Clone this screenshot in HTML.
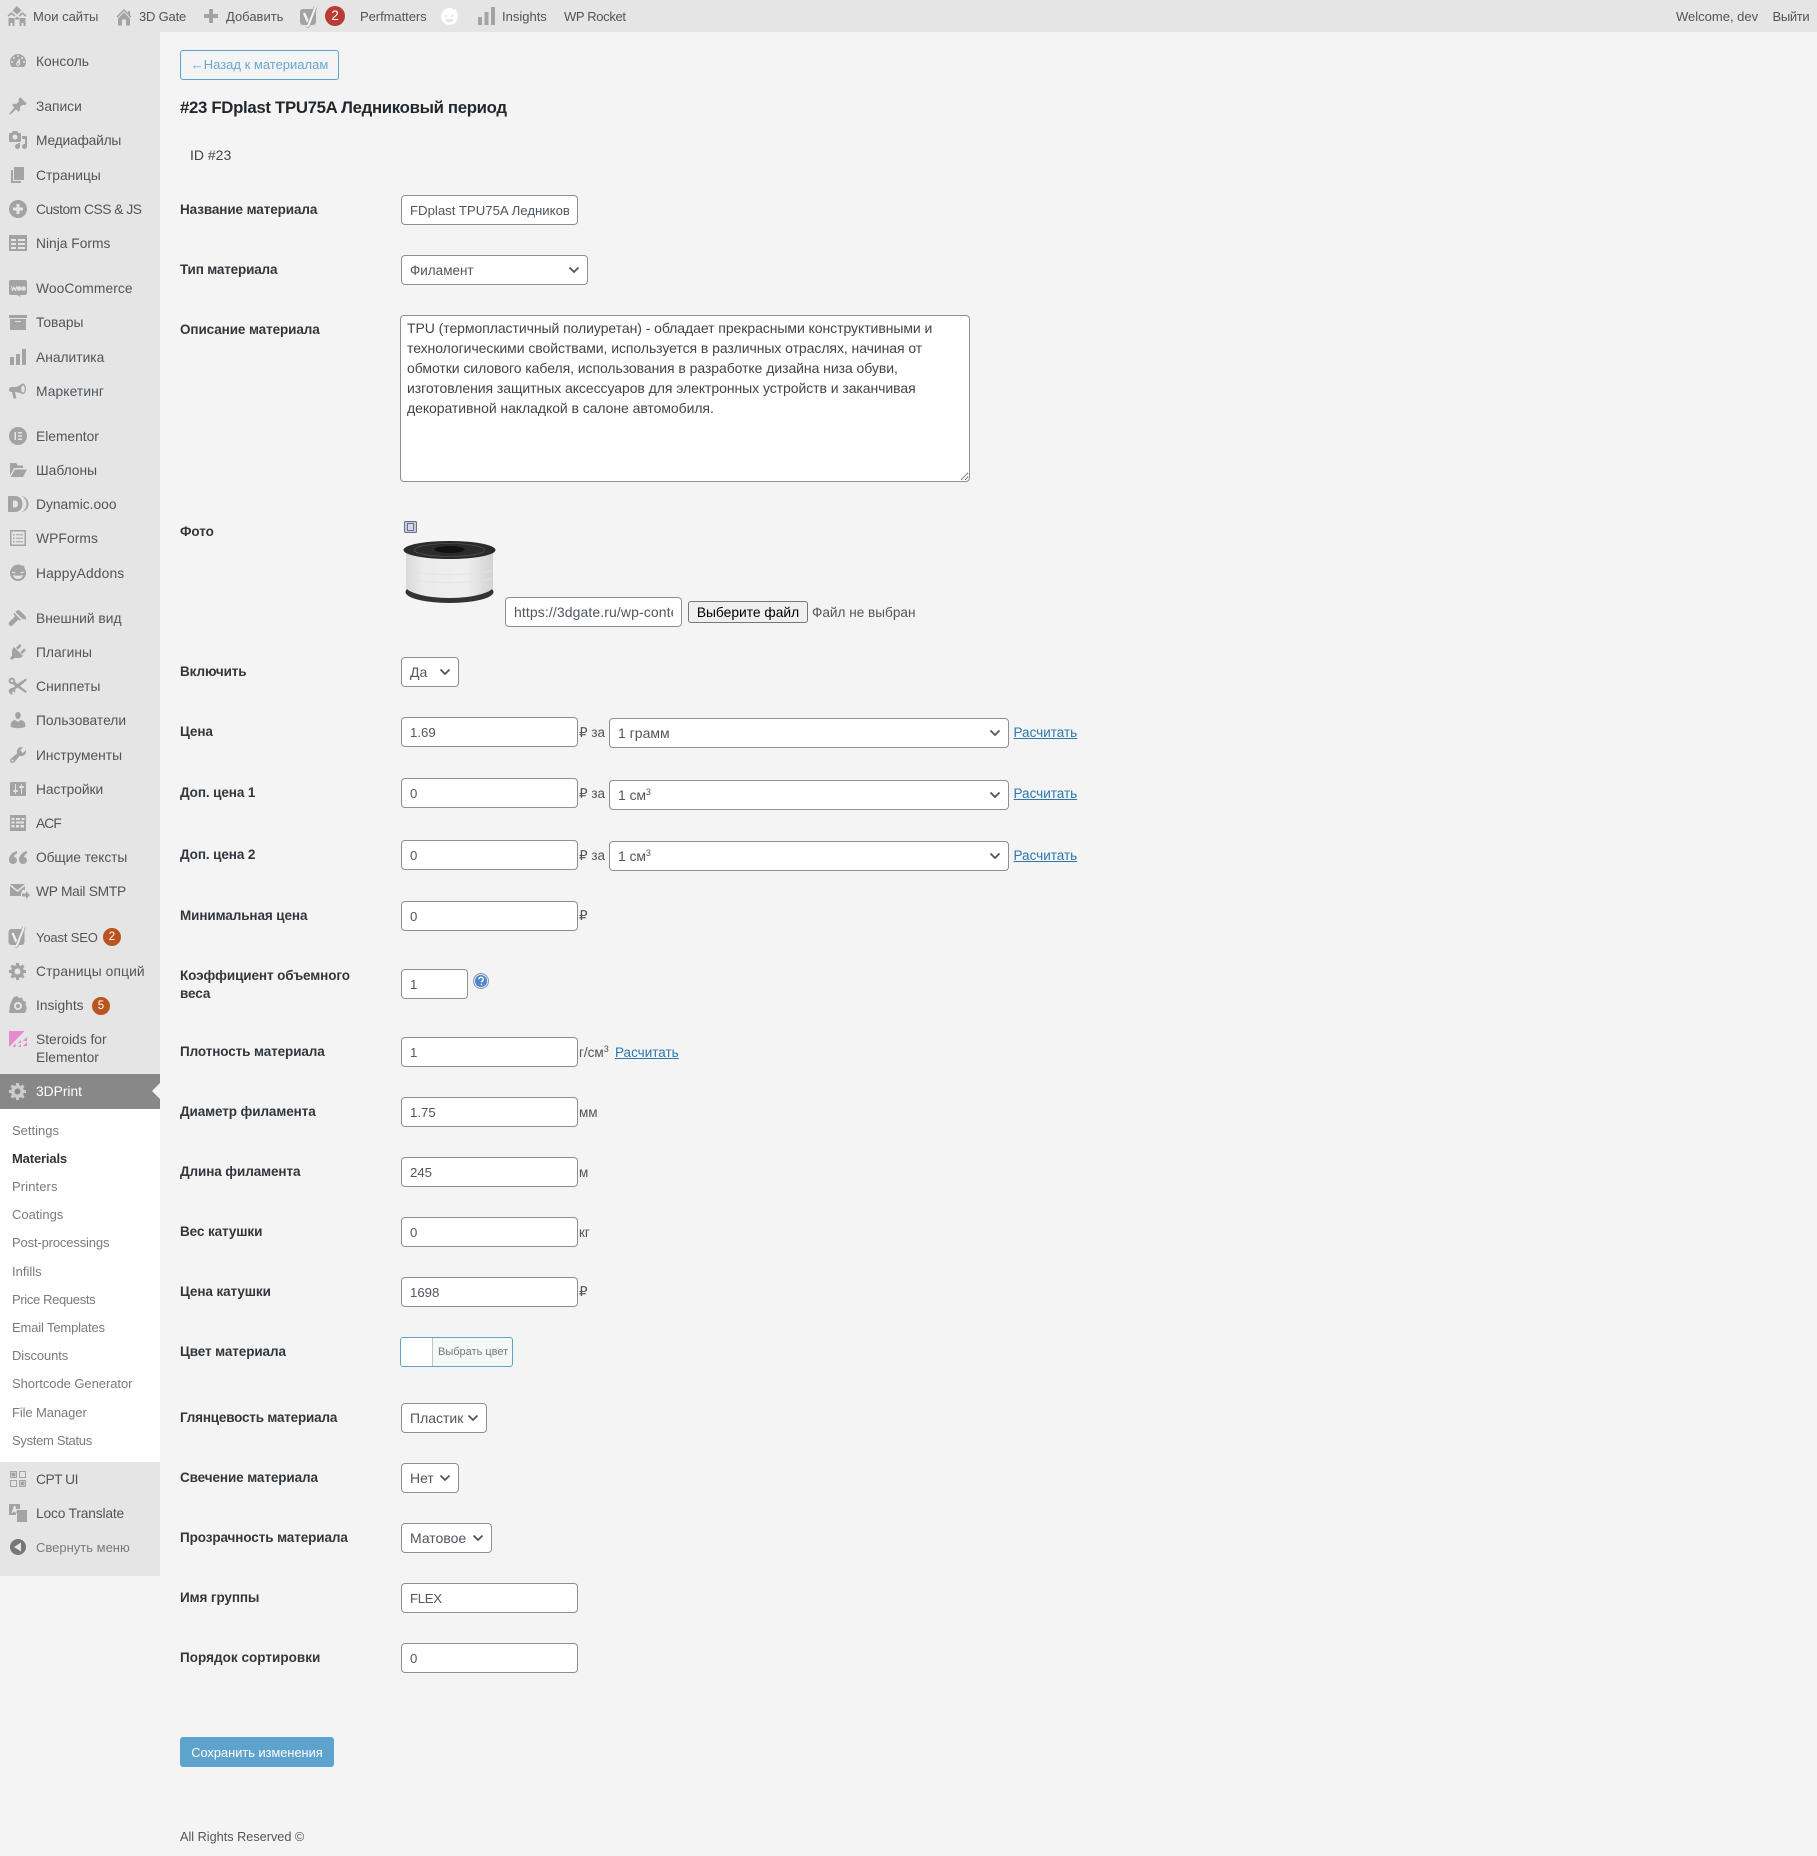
<!DOCTYPE html>
<html lang="ru"><head><meta charset="utf-8"><title>3DPrint Materials</title>
<style>
html,body{margin:0;padding:0}
body{position:relative;width:1817px;height:1856px;overflow:hidden;background:#f4f4f4;font:14px/20px "Liberation Sans","Noto Sans CJK SC",sans-serif;color:#444}
.b{position:absolute}
.t{position:absolute;white-space:nowrap;line-height:20px}
.top{position:absolute;left:0;top:0;width:1817px;height:32px;background:#e5e5e5}
.side{position:absolute;left:0;top:32px;width:160px;height:1544px;background:#e5e5e5}
.sub{position:absolute;left:0;top:1109px;width:160px;height:353px;background:#fff}
.cur{position:absolute;left:0;top:1074px;width:160px;height:35px;background:#888}
.m{font-size:13.8px;left:36px;color:#50555a;margin-top:1px}
.s{font-size:13px;left:12px;color:#7a7a7a;margin-top:1px}
.tb{font-size:13px;color:#50555a;top:6.5px}
svg{position:absolute;fill:#a3a3a3}
.i{width:20px;height:20px;left:8px}
.l{font-size:13.5px;font-weight:bold;left:180px;color:#32373c;letter-spacing:-.1px;margin-top:1px}
input,select,textarea{position:absolute;box-sizing:border-box;margin:0;background:#fff;border:1px solid #8c8f94;border-radius:4px;font:14px "Liberation Sans",sans-serif;color:#50575e;outline:0}
input{padding:0 8px;height:30px;width:177px;left:401px;font-size:13.2px}
select{appearance:none;-webkit-appearance:none;padding:0 8px;height:30px;left:401px}
.ch{fill:none;stroke:#555;stroke-width:1.8;width:12px;height:8px}
.u{font-size:13.5px;left:579px;color:#555}
a{position:absolute;white-space:nowrap;line-height:20px;font-size:13.5px;color:#2b78ad;text-decoration:underline}
sup{font-size:9px;line-height:0;vertical-align:5px}
</style></head><body>

<div class="top"></div>
<div class="side"></div>
<div class="sub"></div>
<div class="cur"></div>
<svg class="b" style="left:152px;top:1081px;width:8px;height:20px;fill:#f4f4f4" viewBox="0 0 8 20"><path d="M8 2L0 10l8 8z"/></svg>

<!-- top bar -->
<svg style="left:7px;top:6px;width:20px;height:21px" viewBox="0 0 20 21"><path d="M10 0l4.500 4.500-4.500 4-4.500-4zM4.500 6l4 3.500-1.200 1.200L4.500 8.200 1.700 10.700.5 9.500zM15.500 6l4 3.500-1.200 1.200-2.800-2.500-2.800 2.500-1.200-1.200zM10 10.500l-2 1.800v1.200h4v-1.200zM1.500 12h6v8h-2v-3h-2v3h-2zM12.500 12h6v8h-2v-3h-2v3h-2z"/></svg>
<div class="t tb" style="left:33px">Мои сайты</div>
<svg style="left:114px;top:6px;width:20px;height:21px" viewBox="0 0 20 20"><path d="M16 8.500l1.530 1.530-1.060 1.060L10 4.620l-6.470 6.470-1.060-1.060L10 2.500l4 4v-2h2v4zm-6-2.460l6 5.990V19H4v-6.970zM12 19v-6H8v6h4z"/></svg>
<div class="t tb" style="left:139px;letter-spacing:-.2px">3D Gate</div>
<svg style="left:203px;top:8px;width:16px;height:16px" viewBox="0 0 16 16"><path d="M6 1h4v5h5v4h-5v5H6v-5H1V6h5z"/></svg>
<div class="t tb" style="left:226px">Добавить</div>
<svg style="left:300px;top:6px;width:19px;height:22px" viewBox="0 0 19 22"><rect x="0" y="3" width="16" height="16" rx="3"/><path d="M4 7l4 9" fill="none" stroke="#f2f2f2" stroke-width="2.400"/><path d="M15.500 1L9 18c-.5 1.500-1.500 2.500-3 2.500" fill="none" stroke="#a3a3a3" stroke-width="3.600"/><path d="M15.500 1L9 18c-.5 1.500-1.500 2.500-3 2.500" fill="none" stroke="#f2f2f2" stroke-width="2"/></svg>
<div class="b" style="left:325px;top:6px;width:20px;height:20px;border-radius:50%;background:#b93b32;color:#fff;font-size:13.500px;line-height:20px;text-align:center">2</div>
<div class="t tb" style="left:360px;letter-spacing:-.05px">Perfmatters</div>
<svg style="left:440px;top:7px;width:19px;height:19px;fill:#fff" viewBox="0 0 18 18"><path fill-rule="evenodd" d="M9 1c2 0 3.500.6 4.800 1.800L15 1l.6 3.500C16.500 5.800 17 7.300 17 9c0 4.400-3.600 8-8 8s-8-3.600-8-8 3.600-8 8-8zM4.500 7.500L4 8.800l3 .7.300-1.200zM13 7.500l-3 .8.300 1.200 3-.7zM5 11c.6 2.300 2 3.500 4 3.500s3.400-1.200 4-3.500c-2.600.8-5.400.8-8 0z"/></svg>
<svg style="left:478px;top:6px;width:17px;height:20px" viewBox="0 0 17 20"><path d="M0 11h4v8H0zM6.500 6h4v13h-4zM13 1h4v18h-4z"/></svg>
<div class="t tb" style="left:502px">Insights</div>
<div class="t tb" style="left:564px;letter-spacing:-.35px">WP Rocket</div>
<div class="t tb" style="left:1676px">Welcome, dev</div>
<div class="t tb" style="left:1772.500px;letter-spacing:-.35px">Выйти</div>

<!-- sidebar -->
<svg class="i" style="top:51px" viewBox="0 0 20 20"><path d="M3.760 16h12.480c1.100-1.370 1.760-3.110 1.760-5 0-4.420-3.580-8-8-8s-8 3.580-8 8c0 1.890.66 3.630 1.760 5zM10 4c.55 0 1 .45 1 1s-.45 1-1 1-1-.45-1-1 .45-1 1-1zM6 6c.55 0 1 .45 1 1s-.45 1-1 1-1-.45-1-1 .45-1 1-1zm8 0c.55 0 1 .45 1 1s-.45 1-1 1-1-.45-1-1 .45-1 1-1zm-5.370 5.550L12 7v6c0 1.100-.9 2-2 2s-2-.9-2-2c0-.57.24-1.080.63-1.450zM4 10c.55 0 1 .45 1 1s-.45 1-1 1-1-.45-1-1 .45-1 1-1zm12 0c.55 0 1 .45 1 1s-.45 1-1 1-1-.45-1-1 .45-1 1-1zm-5 3c0-.55-.45-1-1-1s-1 .45-1 1 .45 1 1 1 1-.45 1-1z"/></svg>
<div class="t m" style="top:51px">Консоль</div>
<svg class="i" style="top:96px" viewBox="0 0 20 20"><path d="M10.440 3.020l1.820-1.820 6.360 6.350-1.830 1.820c-1.050-.68-2.480-.57-3.410.36l-.75.75c-.92.93-1.040 2.350-.35 3.410l-1.830 1.820-2.410-2.410-2.800 2.790c-.42.42-3.380 2.710-3.800 2.290s1.860-3.390 2.280-3.810l2.790-2.790L4.100 9.360l1.830-1.820c1.050.69 2.480.57 3.400-.36l.75-.75c.93-.92 1.050-2.350.36-3.410z"/></svg>
<div class="t m" style="top:96px">Записи</div>
<svg class="i" style="top:130px" viewBox="0 0 20 20"><path d="M13 11V4c0-.55-.45-1-1-1h-1.670L9 1H5L3.670 3H2c-.55 0-1 .45-1 1v7c0 .55.45 1 1 1h10c.55 0 1-.45 1-1zM7 4.500c1.380 0 2.500 1.120 2.500 2.500S8.380 9.500 7 9.500 4.500 8.380 4.500 7 5.620 4.500 7 4.500zM14 6h5v10.500c0 1.380-1.120 2.500-2.500 2.500S14 17.880 14 16.500s1.120-2.500 2.500-2.500c.17 0 .34.02.5.05V9h-3V6zm-4 8.050V13h2v3.500c0 1.380-1.120 2.500-2.500 2.500S7 17.880 7 16.500 8.120 14 9.500 14c.17 0 .34.02.5.05z"/></svg>
<div class="t m" style="top:130px;letter-spacing:-.2px">Медиафайлы</div>
<svg class="i" style="top:165px" viewBox="0 0 20 20"><path d="M6 15V2h10v13H6zm-1 1h8v2H3V5h2v11z"/></svg>
<div class="t m" style="top:165px">Страницы</div>
<svg class="i" style="top:199px" viewBox="0 0 20 20"><path fill-rule="evenodd" d="M10 1a9 9 0 1 1 0 18 9 9 0 0 1 0-18zM8.500 5v3.500H5v3h3.500V15h3v-3.500H15v-3h-3.500V5z"/></svg>
<div class="t m" style="top:199px;letter-spacing:-.48px">Custom CSS &amp; JS</div>
<svg class="i" style="top:233px" viewBox="0 0 20 20"><path fill-rule="evenodd" d="M1 2h18v16H1zM3 6v2h5V6zm7 0v2h7V6zM3 10v2h5v-2zm7 0v2h7v-2zM3 14v2h5v-2zm7 0v2h7v-2z"/></svg>
<div class="t m" style="top:233px">Ninja Forms</div>
<svg class="i" style="top:278px" viewBox="0 0 20 20"><path fill-rule="evenodd" d="M3 2h14a2 2 0 0 1 2 2v11a2 2 0 0 1-2 2h-5l1 2-4-2H3a2 2 0 0 1-2-2V4a2 2 0 0 1 2-2zM3 8l1 5h1l1-2.500L7 13h1l1-5H8l-.6 3L6.300 8.500h-.6L4.600 11 4 8zm8 .2a2.300 2.300 0 1 0 0 4.600 2.300 2.300 0 0 0 0-4.600zm4.500 0a2.300 2.300 0 1 0 0 4.600 2.300 2.300 0 0 0 0-4.600z"/></svg>
<div class="t m" style="top:278px;letter-spacing:.1px">WooCommerce</div>
<svg class="i" style="top:312px" viewBox="0 0 20 20"><path d="M19 3v3H1V3zM2 7h16v11H2zm11 3V9H7v1z"/></svg>
<div class="t m" style="top:312px">Товары</div>
<svg class="i" style="top:347px" viewBox="0 0 20 20"><path d="M18 18V2h-4v16h4zm-6 0V7H8v11h4zm-6 0v-8H2v8h4z"/></svg>
<div class="t m" style="top:347px">Аналитика</div>
<svg class="i" style="top:381px" viewBox="0 0 20 20"><path fill-rule="evenodd" d="M18 8c0 3-1.500 5-3 5-.8 0-5-2-8-2l1.500 6.500H5.500L4 11H3c-1 0-2-1-2-2.500S2 6 3 6h4c3 0 7-3.500 8-3.500 1.500 0 3 2.500 3 5.500zm-3-3.500c-1 0-1.800 1.500-1.800 3.500s.8 3.500 1.800 3.500 1.800-1.500 1.800-3.500-.8-3.500-1.800-3.500z"/></svg>
<div class="t m" style="top:381px;letter-spacing:.1px">Маркетинг</div>
<svg class="i" style="top:426px" viewBox="0 0 20 20"><path fill-rule="evenodd" d="M10 1a9 9 0 1 1 0 18 9 9 0 0 1 0-18zM6.500 6v8H8V6zm3.500 0v1.500h4V6zm0 3.300v1.500h4V9.300zm0 3.200V14h4v-1.500z"/></svg>
<div class="t m" style="top:426px">Elementor</div>
<svg class="i" style="top:460px" viewBox="0 0 20 20"><path d="M2 3h6l2 2.500h5V8H6L2 15.500zM6.800 9.500H19L15 17H2.800z"/></svg>
<div class="t m" style="top:460px">Шаблоны</div>
<svg class="i" style="top:494px;left:7px;width:22px" viewBox="0 0 22 20"><path fill-rule="evenodd" d="M1 2h7c4.500 0 7.500 3.300 7.500 8S12.500 18 8 18H1zM6 6.500v7h2c1.800 0 3-1.500 3-3.500s-1.200-3.500-3-3.500z"/><path d="M15 2c4 1 6.500 4.200 6.500 8s-2.500 7-6.500 8c2.500-1.800 4.500-4.700 4.500-8S17.500 3.800 15 2z"/></svg>
<div class="t m" style="top:494px">Dynamic.ooo</div>
<svg class="i" style="top:528px" viewBox="0 0 20 20"><path fill-rule="evenodd" d="M2 2h16v16H2zm1.500 1.500v13h13v-13zM5 6h1.500v1.500H5zm3 .3h7v1H8zM5 9.500h1.500V11H5zm3 .3h7v1H8zM5 13h1.500v1.500H5zm3 .3h7v1H8z"/></svg>
<div class="t m" style="top:528px;letter-spacing:.1px">WPForms</div>
<svg class="i" style="top:563px" viewBox="0 0 20 20"><path fill-rule="evenodd" d="M10 1.500c2 0 3.700.7 5 1.800l1-1.300.5 3.200c1 1.400 1.500 3 1.500 4.800 0 4.400-3.600 8-8 8s-8-3.600-8-8 3.600-8.500 8-8.500zM4.500 8.500L4 9.800l3.200.7.300-1.200zm11 0l-3 .8.300 1.200 3.200-.7zM5 12c.6 2.500 2.500 4 5 4s4.400-1.500 5-4c-3.200.9-6.800.9-10 0z"/></svg>
<div class="t m" style="top:563px;letter-spacing:.15px">HappyAddons</div>
<svg class="i" style="top:608px" viewBox="0 0 20 20"><path d="M14.480 11.060L7.410 3.990l1.500-1.500c.5-.56 2.300-.47 3.360.59l4.950 4.950c1.060 1.060 1.240 2.680.59 3.360zm-8.480-6.360l7 7-1.200 1.200-1.400-1.400-5.700 5.700c-.8.800-2.800 1-3.500.2s-.6-2.700.2-3.500l5.700-5.700-1.400-1.400z"/></svg>
<div class="t m" style="top:608px">Внешний вид</div>
<svg class="i" style="top:642px" viewBox="0 0 20 20"><path d="M13.110 4.360L9.870 7.600 8 5.730l3.240-3.240c.35-.34 1.050-.2 1.560.32.52.51.66 1.210.31 1.550zm-8 1.770l.91-1.120 9.010 9.010-1.190.84c-.71.71-2.630 1.160-3.820 1.160H6.140L4.900 17.260c-.59.59-1.540.59-2.120 0-.59-.58-.59-1.530 0-2.120l1.240-1.240v-3.880c0-1.130.4-3.190 1.090-3.890zm7.260 3.970l3.240-3.240c.34-.35 1.040-.21 1.550.31.520.51.660 1.210.31 1.550l-3.240 3.250z"/></svg>
<div class="t m" style="top:642px">Плагины</div>
<svg class="i" style="top:676px" viewBox="0 0 20 20"><path fill-rule="evenodd" d="M4 1.500a3.200 3.200 0 0 1 3 4.200L9.500 8l8-5.500L19 4l-7 6 7 5.500-1.500 1.500-8-5.500-2.500 2.200A3.300 3.300 0 1 1 4.800 12l2.200-2-2.200-2A3.300 3.300 0 1 1 4 1.500zm0 2a1.300 1.300 0 1 0 0 2.600 1.300 1.300 0 0 0 0-2.600zm1.500 12a1.300 1.300 0 1 0 0 2.600 1.300 1.300 0 0 0 0-2.600z"/></svg>
<div class="t m" style="top:676px;letter-spacing:.1px">Сниппеты</div>
<svg class="i" style="top:710px" viewBox="0 0 20 20"><path d="M10 9.250c-2.270 0-2.730-3.440-2.730-3.440C7 4.020 7.820 2 9.970 2c2.160 0 2.980 2.020 2.710 3.810 0 0-.41 3.440-2.680 3.440zm0 2.570L12.720 10c2.390 0 4.520 2.330 4.520 4.530v2.490s-3.650 1.130-7.240 1.130c-3.650 0-7.240-1.130-7.240-1.130v-2.490c0-2.250 1.940-4.480 4.470-4.480z"/></svg>
<div class="t m" style="top:710px">Пользователи</div>
<svg class="i" style="top:745px" viewBox="0 0 20 20"><path d="M16.680 9.770c-1.340 1.340-3.300 1.670-4.950.99l-5.410 6.520c-.99.99-2.590.99-3.580 0s-.99-2.590 0-3.570l6.520-5.420c-.68-1.650-.35-3.610.99-4.950 1.280-1.280 3.120-1.620 4.720-1.060l-2.890 2.890 2.820 2.820 2.860-2.870c.53 1.580.18 3.390-1.080 4.650zM3.810 16.210c.4.39 1.040.39 1.430 0 .4-.4.4-1.040 0-1.430-.39-.4-1.030-.4-1.430 0-.39.39-.39 1.030 0 1.430z"/></svg>
<div class="t m" style="top:745px">Инструменты</div>
<svg class="i" style="top:779px" viewBox="0 0 20 20"><path d="M18 16V4c0-.55-.45-1-1-1H3c-.55 0-1 .45-1 1v12c0 .55.45 1 1 1h14c.55 0 1-.45 1-1zM8 11h1c.55 0 1 .45 1 1s-.45 1-1 1H8v1.500c0 .28-.22.5-.5.5s-.5-.22-.5-.5V13H6c-.55 0-1-.45-1-1s.45-1 1-1h1V5.500c0-.28.22-.5.5-.5s.5.22.5.5V11zm5-2h-1c-.55 0-1-.45-1-1s.45-1 1-1h1V5.500c0-.28.22-.5.5-.5s.5.22.5.5V7h1c.55 0 1 .45 1 1s-.45 1-1 1h-1v5.500c0 .28-.22.5-.5.5s-.5-.22-.5-.5V9z" fill-rule="evenodd"/></svg>
<div class="t m" style="top:779px;letter-spacing:-.05px">Настройки</div>
<svg class="i" style="top:813px" viewBox="0 0 20 20"><path fill-rule="evenodd" d="M2 2h16v16H2zm1.500 3v2h3V5zm4.500 0v2h4V5zm5.500 0v2h3V5zm-10 3.500v2h3v-2zm4.500 0v2h8v-2zm-4.500 3.500v2.500h3V12zm4.500 0v2.500h3V12zm4.500 0v2.500h3.500V12z"/></svg>
<div class="t m" style="top:813px;letter-spacing:-.9px">ACF</div>
<svg class="i" style="top:847px" viewBox="0 0 20 20"><path d="M9 4C5 5 1 8 1 12.500 1 15 2.500 17 5 17s4-1.700 4-3.700S7.500 10 6 10c.3-1.500 1.500-3 3-3.800zM19 4c-4 1-8 4-8 8.500 0 2.500 1.500 4.500 4 4.500s4-1.700 4-3.700-1.500-3.300-3-3.300c.3-1.500 1.500-3 3-3.800z"/></svg>
<div class="t m" style="top:847px;letter-spacing:-.1px">Общие тексты</div>
<svg class="i" style="top:881px;width:22px;left:9px" viewBox="0 0 22 20"><path d="M1 3h15l-7.500 6zM1 5l7.500 6L16 5v4h-3v2.500h-1V15H1zM13 12.500h4V10l4 4-4 4v-2.500h-4z"/></svg>
<div class="t m" style="top:881px;letter-spacing:-.28px">WP Mail SMTP</div>
<svg class="i" style="top:926px;height:22px" viewBox="0 0 19 22"><rect x="0" y="3" width="16" height="16" rx="3"/><path d="M4 7l4 9" fill="none" stroke="#eee" stroke-width="2.400"/><path d="M15.500 1L9 18c-.5 1.500-1.500 2.500-3 2.500" fill="none" stroke="#a3a3a3" stroke-width="3.600"/><path d="M15.500 1L9 18c-.5 1.500-1.500 2.500-3 2.500" fill="none" stroke="#eee" stroke-width="2"/></svg>
<div class="t m" style="top:927px;font-size:13px;letter-spacing:-.15px">Yoast SEO</div>
<div class="b" style="left:103px;top:928px;width:18px;height:18px;border-radius:50%;background:#ba541e;color:#fff;font-size:11.500px;line-height:18px;text-align:center">2</div>
<svg class="i" style="top:961px" viewBox="0 0 20 20"><path d="M18 12h-2.180c-.17.7-.44 1.350-.81 1.930l1.540 1.540-2.100 2.100-1.540-1.540c-.58.36-1.230.63-1.910.79V19H8v-2.180c-.68-.16-1.330-.43-1.910-.79l-1.540 1.540-2.120-2.120 1.540-1.540c-.36-.58-.63-1.230-.79-1.910H1V9.030h2.170c.16-.7.44-1.350.8-1.940L2.430 5.550l2.100-2.100 1.540 1.540c.58-.37 1.240-.64 1.930-.81V2h3v2.180c.68.16 1.330.43 1.910.79l1.540-1.540 2.120 2.120-1.540 1.540c.36.59.64 1.240.8 1.940H18V12zm-8.500 1.500c1.660 0 3-1.340 3-3s-1.340-3-3-3-3 1.340-3 3 1.340 3 3 3z"/></svg>
<div class="t m" style="top:961px;letter-spacing:.12px">Страницы опций</div>
<svg class="i" style="top:995px" viewBox="0 0 20 20"><path fill-rule="evenodd" d="M9 1l2 2 3-.5 1 3 3 1.500-.5 3 1.500 3-2 5H1l1-8 2-5 2-3zm1 6a4 4 0 1 0 0 8 4 4 0 0 0 0-8zm0 2a2 2 0 1 1 0 4 2 2 0 0 1 0-4z"/></svg>
<div class="t m" style="top:995px">Insights</div>
<div class="b" style="left:92px;top:997px;width:18px;height:18px;border-radius:50%;background:#ba541e;color:#fff;font-size:11.500px;line-height:18px;text-align:center">5</div>
<svg class="i" style="top:1030px;height:18px;fill:#e58acb" viewBox="0 0 20 18"><path d="M1 1h15.500L1 17zM19 7l-4 4h4zM13 10l-3 3h3zM19 12l-4 4h4zM13 14l-3 3h3zM7.500 13l-3 4h3z"/></svg>
<div class="t m" style="top:1029px">Steroids for</div>
<div class="t m" style="top:1047px">Elementor</div>
<svg class="i" style="top:1081px;fill:#ccc" viewBox="0 0 20 20"><path d="M18 12h-2.180c-.17.7-.44 1.350-.81 1.930l1.540 1.540-2.100 2.100-1.540-1.540c-.58.36-1.230.63-1.910.79V19H8v-2.180c-.68-.16-1.330-.43-1.910-.79l-1.540 1.540-2.120-2.120 1.540-1.540c-.36-.58-.63-1.230-.79-1.910H1V9.030h2.170c.16-.7.44-1.350.8-1.940L2.430 5.550l2.100-2.100 1.540 1.540c.58-.37 1.240-.64 1.930-.81V2h3v2.180c.68.16 1.330.43 1.910.79l1.540-1.540 2.120 2.120-1.540 1.540c.36.59.64 1.240.8 1.940H18V12zm-8.500 1.500c1.660 0 3-1.340 3-3s-1.340-3-3-3-3 1.340-3 3 1.340 3 3 3z"/></svg>
<div class="t m" style="top:1081px;color:#fff">3DPrint</div>

<div class="t s" style="top:1120px">Settings</div>
<div class="t s" style="top:1148px;color:#333;font-weight:bold;letter-spacing:-.15px">Materials</div>
<div class="t s" style="top:1176px;letter-spacing:.1px">Printers</div>
<div class="t s" style="top:1204px">Coatings</div>
<div class="t s" style="top:1232px;letter-spacing:-.15px">Post-processings</div>
<div class="t s" style="top:1261px">Infills</div>
<div class="t s" style="top:1289px;letter-spacing:-.35px">Price Requests</div>
<div class="t s" style="top:1317px;letter-spacing:-.15px">Email Templates</div>
<div class="t s" style="top:1345px;letter-spacing:-.1px">Discounts</div>
<div class="t s" style="top:1373px;letter-spacing:-.05px">Shortcode Generator</div>
<div class="t s" style="top:1402px;letter-spacing:-.1px">File Manager</div>
<div class="t s" style="top:1430px;letter-spacing:-.3px">System Status</div>

<svg class="i" style="top:1469px" viewBox="0 0 20 20"><path fill-rule="evenodd" d="M2 2h7v7H2zm1 1v5h5V3zM11 2h7v7h-7zm1 1v5h5V3zM2 11h7v7H2zm1 1v5h5v-5zM11 11h7v7h-7zm1 1v5h5v-5z"/><path d="M3.500 3.500h4v4h-4zM12.500 12.500h4v4h-4z"/></svg>
<div class="t m" style="top:1469px;letter-spacing:-.5px">CPT UI</div>
<svg class="i" style="top:1503px" viewBox="0 0 20 20"><path fill-rule="evenodd" d="M1 1h11v5H8v6H1zm5 2L3.500 10h1.300l.4-1.300h2l.4 1.300h1L7.500 3zM9 7h10v12H9z"/></svg>
<div class="t m" style="top:1503px;letter-spacing:-.18px">Loco Translate</div>
<svg class="i" style="top:1537px;fill:#777" viewBox="0 0 20 20"><path fill-rule="evenodd" d="M10 2a8 8 0 1 1 0 16 8 8 0 0 1 0-16zm3 3.500L6 10l7 4.500z"/></svg>
<div class="t m" style="top:1537px;color:#7a7a7a;font-size:13px">Свернуть меню</div>

<!-- content -->
<div class="b" style="left:180px;top:50px;width:159px;height:30px;box-sizing:border-box;border:1px solid #5ea3cd;border-radius:3px;color:#6ba6d2;font-size:13px;line-height:28px;white-space:nowrap;text-align:center">←Назад к материалам</div>
<div class="t" style="left:180px;top:98px;font-size:16.800px;font-weight:bold;color:#23282d;letter-spacing:-.32px">#23 FDplast TPU75A Ледниковый период</div>
<div class="t" style="left:190px;top:145px;font-size:14px;color:#444">ID #23</div>

<div class="t l" style="top:199px">Название материала</div>
<input value="FDplast TPU75A Ледниковый период" style="top:195px">

<div class="t l" style="top:260px;margin-top:0;letter-spacing:-.17px">Тип материала</div>
<select style="top:255px;width:187px;font-size:13.500px"><option>Филамент</option></select>
<svg class="ch" style="left:568px;top:266px" viewBox="0 0 12 8"><path d="M1.500 1.500l4.500 4.500 4.500-4.500"/></svg>

<div class="t l" style="top:319px">Описание материала</div>
<textarea wrap="off" style="left:400px;top:315px;width:570px;height:167px;padding:2px 6px;line-height:20px;color:#444;white-space:pre;overflow:hidden;letter-spacing:-.06px">TPU (термопластичный полиуретан) - обладает прекрасными конструктивными и
технологическими свойствами, используется в различных отраслях, начиная от
обмотки силового кабеля, использования в разработке дизайна низа обуви,
изготовления защитных аксессуаров для электронных устройств и заканчивая
декоративной накладкой в салоне автомобиля.</textarea>

<div class="t l" style="top:521px">Фото</div>
<svg style="left:404px;top:521px;width:13px;height:12px;fill:none;stroke:#6a6f96" viewBox="0 0 13 12"><rect x=".5" y=".5" width="12" height="11" rx="1" fill="#c9cad8"/><rect x="3.500" y="2.500" width="6" height="7" fill="#d8d8e4"/></svg>
<svg style="left:403px;top:540px;width:93px;height:64px" viewBox="0 0 93 64">
<defs><linearGradient id="sp" x1="0" x2="1" y1="0" y2="0"><stop offset="0" stop-color="#d9d9d9"/><stop offset=".2" stop-color="#ececec"/><stop offset=".7" stop-color="#eeeeee"/><stop offset="1" stop-color="#d2d2d2"/></linearGradient></defs>
<ellipse cx="46.500" cy="52" rx="44" ry="11" fill="#333"/>
<path d="M3 10h87v37c0 5-19 11-43.500 11S3 52 3 47z" fill="url(#sp)"/>
<path d="M3 30c15 6 72 6 87 0M3 38c15 6 72 6 87 0" fill="none" stroke="#e2e2e2" stroke-width=".7"/>
<ellipse cx="46.500" cy="10" rx="46" ry="9" fill="#2b2b2b"/>
<ellipse cx="46.500" cy="9.500" rx="15" ry="3.500" fill="#111"/>
<ellipse cx="46.500" cy="10" rx="35" ry="6.500" fill="none" stroke="#5c5c5c" stroke-width=".6"/>
</svg>
<input value="https://3dgate.ru/wp-content/uploads/spool.png" style="left:505px;top:597px;font-size:14px;letter-spacing:.1px">
<div class="b" style="left:688px;top:601px;width:120px;height:22px;box-sizing:border-box;background:#efefef;border:1px solid #767676;border-radius:3px;color:#000;font-size:13.800px;line-height:21px;text-align:center;white-space:nowrap">Выберите файл</div>
<div class="t" style="left:812px;top:603px;font-size:13.600px;color:#555">Файл не выбран</div>

<div class="t l" style="top:661px">Включить</div>
<select style="top:657px;width:58px"><option>Да</option></select>
<svg class="ch" style="left:439px;top:668px" viewBox="0 0 12 8"><path d="M1.500 1.500l4.500 4.500 4.500-4.500"/></svg>

<div class="t l" style="top:721px">Цена</div>
<input value="1.69" style="top:717px">
<div class="t u" style="top:723px">₽ за</div>
<select style="left:609px;top:718px;width:400px"><option>1 грамм</option></select>
<svg class="ch" style="left:989px;top:729px" viewBox="0 0 12 8"><path d="M1.500 1.500l4.500 4.500 4.500-4.500"/></svg>
<a style="left:1013.500px;top:723px">Расчитать</a>

<div class="t l" style="top:782px">Доп. цена 1</div>
<input value="0" style="top:778px">
<div class="t u" style="top:784px">₽ за</div>
<select style="left:609px;top:780px;width:400px"><option></option></select>
<div class="t" style="left:618px;top:785px;color:#50575e;letter-spacing:-.1px">1 см<sup>3</sup></div>
<svg class="ch" style="left:989px;top:791px" viewBox="0 0 12 8"><path d="M1.500 1.500l4.500 4.500 4.500-4.500"/></svg>
<a style="left:1013.500px;top:784px">Расчитать</a>

<div class="t l" style="top:844px">Доп. цена 2</div>
<input value="0" style="top:840px">
<div class="t u" style="top:846px">₽ за</div>
<select style="left:609px;top:841px;width:400px"><option></option></select>
<div class="t" style="left:618px;top:846px;color:#50575e;letter-spacing:-.1px">1 см<sup>3</sup></div>
<svg class="ch" style="left:989px;top:852px" viewBox="0 0 12 8"><path d="M1.500 1.500l4.500 4.500 4.500-4.500"/></svg>
<a style="left:1013.500px;top:846px">Расчитать</a>

<div class="t l" style="top:905px">Минимальная цена</div>
<input value="0" style="top:901px">
<div class="t u" style="top:906px">₽</div>

<div class="t l" style="top:966px;margin-top:0">Коэффициент объемного</div>
<div class="t l" style="top:984px;margin-top:0">веса</div>
<input value="1" style="top:969px;width:67px">
<svg style="left:473px;top:973px;width:16px;height:16px" viewBox="0 0 16 16"><circle cx="8" cy="8" r="7.500" fill="#dfe5ee" stroke="#8a96a8"/><circle cx="8" cy="8" r="6" fill="#4f86d0"/><path d="M5.800 6.200C6 4.900 7 4.300 8.100 4.300c1.300 0 2.200.8 2.200 1.900 0 1.600-1.800 1.600-1.800 3.200M8.500 10.800v1.400" fill="none" stroke="#fff" stroke-width="1.400"/></svg>

<div class="t l" style="top:1041px">Плотность материала</div>
<input value="1" style="top:1037px">
<div class="t u" style="top:1043px">г/см<sup>3</sup></div>
<a style="left:615px;top:1043px">Расчитать</a>

<div class="t l" style="top:1101px">Диаметр филамента</div>
<input value="1.75" style="top:1097px">
<div class="t u" style="top:1103px">мм</div>

<div class="t l" style="top:1161px">Длина филамента</div>
<input value="245" style="top:1157px">
<div class="t u" style="top:1163px">м</div>

<div class="t l" style="top:1221px">Вес катушки</div>
<input value="0" style="top:1217px">
<div class="t u" style="top:1223px">кг</div>

<div class="t l" style="top:1281px">Цена катушки</div>
<input value="1698" style="top:1277px">
<div class="t u" style="top:1282px">₽</div>

<div class="t l" style="top:1341px">Цвет материала</div>
<div class="b" style="left:400px;top:1337px;width:113px;height:30px;box-sizing:border-box;border:1px solid #5ea3cd;border-radius:3px;background:#f6f7f7;overflow:hidden">
<div class="b" style="left:0;top:0;width:31px;height:28px;background:#fff;border-right:1px solid #c3c4c7"></div>
<div class="t" style="left:37px;top:4px;font-size:11px;color:#777">Выбрать цвет</div></div>

<div class="t l" style="top:1407px;letter-spacing:-.2px">Глянцевость материала</div>
<select style="top:1403px;width:86px"><option>Пластик</option></select>
<svg class="ch" style="left:467px;top:1414px" viewBox="0 0 12 8"><path d="M1.500 1.500l4.500 4.500 4.500-4.500"/></svg>

<div class="t l" style="top:1467px">Свечение материала</div>
<select style="top:1463px;width:58px"><option>Нет</option></select>
<svg class="ch" style="left:439px;top:1474px" viewBox="0 0 12 8"><path d="M1.500 1.500l4.500 4.500 4.500-4.500"/></svg>

<div class="t l" style="top:1527px">Прозрачность материала</div>
<select style="top:1523px;width:91px"><option>Матовое</option></select>
<svg class="ch" style="left:472px;top:1534px" viewBox="0 0 12 8"><path d="M1.500 1.500l4.500 4.500 4.500-4.500"/></svg>

<div class="t l" style="top:1587px">Имя группы</div>
<input value="FLEX" style="top:1583px;letter-spacing:-.3px">

<div class="t l" style="top:1647px;letter-spacing:.03px">Порядок сортировки</div>
<input value="0" style="top:1643px">

<div class="b" style="left:180px;top:1737px;width:154px;height:30px;background:#5ea3cd;border-radius:3px;color:#fff;font-size:12.800px;line-height:31px;text-align:center;white-space:nowrap">Сохранить изменения</div>
<div class="t" style="left:180px;top:1827px;font-size:12.700px;color:#555">All Rights Reserved ©</div>
</body></html>
